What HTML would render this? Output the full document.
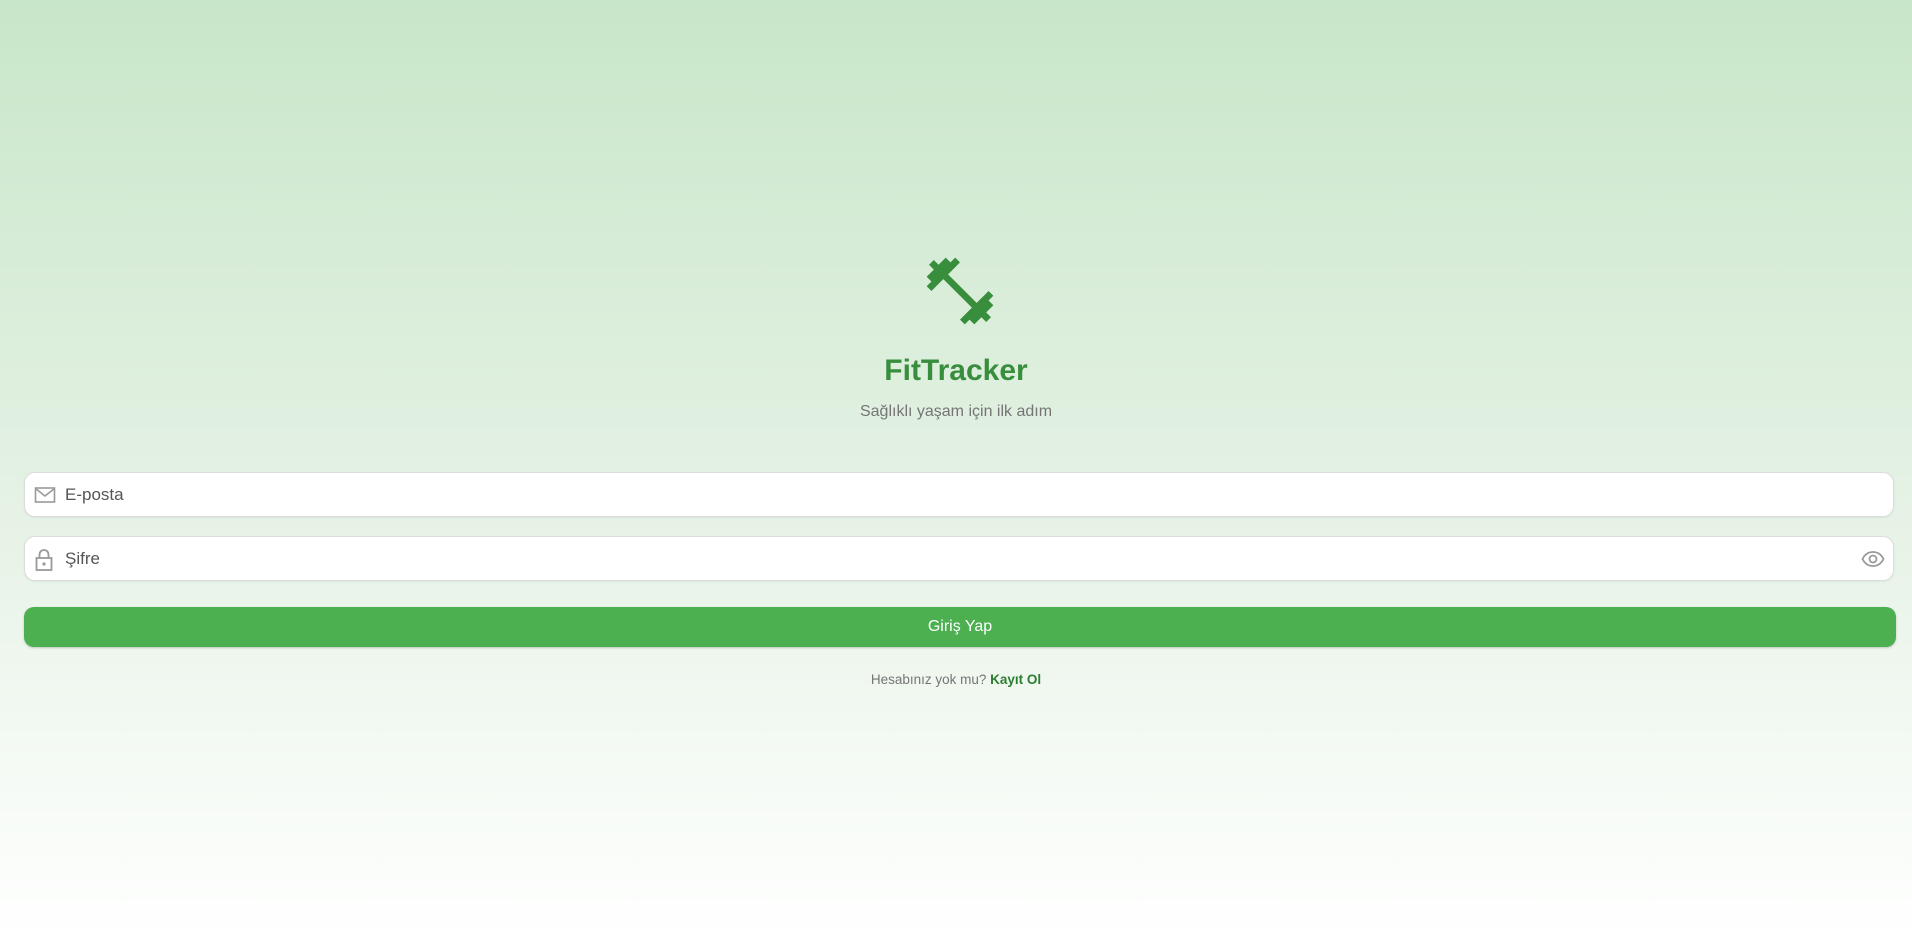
<!DOCTYPE html>
<html><head><meta charset="utf-8"><style>
html,body{margin:0;padding:0;width:1912px;height:940px;overflow:hidden}
body{background:linear-gradient(to bottom,#c8e6c9 0%,#e3f1e3 50%,#ffffff 100%);font-family:"Liberation Sans",sans-serif;position:relative}
.logo{position:absolute;left:920px;top:251px;width:80px;height:80px}
.title{position:absolute;left:0;width:1912px;top:349px;text-align:center;font-size:30px;font-weight:bold;color:#388e3c;line-height:44px}
.sub{position:absolute;left:0;width:1912px;top:401px;text-align:center;font-size:16px;color:#757575;line-height:22px}
.field{position:absolute;left:24px;width:1870px;height:45px;background:#fff;border:1px solid #dcdcdc;border-radius:11px;box-sizing:border-box;box-shadow:0 1px 2px rgba(0,0,0,.06)}
.field span{position:absolute;left:40px;top:12px;font-size:17px;color:#555;line-height:20px}
.field svg{position:absolute}
.btn{position:absolute;left:24px;top:607px;width:1872px;height:40px;background:#4caf50;border-radius:10px;color:#fff;text-align:center;font-size:16px;line-height:40px;box-shadow:0 1px 2px rgba(0,0,0,.2)}
.signup{position:absolute;left:0;width:1912px;top:670px;text-align:center;font-size:13.5px;color:#757575;line-height:20px}
.signup b{color:#2e7d32}
</style></head><body>
<svg class="logo" viewBox="0 0 24 24"><path fill="#388e3c" d="M20.57 14.86L22 13.43 20.57 12 17 15.57 8.43 7 12 3.43 10.57 2 9.14 3.43 7.71 2 5.57 4.14 4.14 2.71 2.71 4.14l1.43 1.43L2 7.71l1.43 1.43L2 10.57 3.43 12 7 8.43 15.57 17 12 20.57 13.43 22l1.43-1.43L16.29 22l2.14-2.14 1.43 1.43 1.43-1.43-1.43-1.43L22 16.29z"/></svg>
<div class="title">FitTracker</div>
<div class="sub">Sağlıklı yaşam için ilk adım</div>
<div class="field" style="top:472px"><svg style="left:9px;top:12px" width="22" height="20" viewBox="0 0 22 20"><rect x="1.5" y="3" width="19" height="14" fill="none" stroke="#9a9a9a" stroke-width="1.6"/><path d="M1.5 3.5L11 11l9.5-7.5" fill="none" stroke="#9a9a9a" stroke-width="1.6"/></svg><span>E-posta</span></div>
<div class="field" style="top:536px"><svg style="left:10px;top:11px" width="18" height="24" viewBox="0 0 18 24"><path d="M4.5 10V6.5a4.5 4.5 0 0 1 9 0V10" fill="none" stroke="#9a9a9a" stroke-width="1.8"/><rect x="1.5" y="10" width="15" height="12" fill="none" stroke="#9a9a9a" stroke-width="1.8"/><circle cx="9" cy="16" r="1.6" fill="#9a9a9a"/></svg><span>Şifre</span><svg style="right:8px;top:13px" width="24" height="18" viewBox="0 0 24 18"><path d="M1.5 9C4 4 8 2 12 2s8 2 10.5 7c-2.5 5-6.5 7-10.5 7S4 14 1.5 9z" fill="none" stroke="#9a9a9a" stroke-width="1.8"/><circle cx="12" cy="9" r="3.5" fill="none" stroke="#9a9a9a" stroke-width="1.8"/></svg></div>
<div class="btn">Giriş Yap</div>
<div class="signup">Hesabınız yok mu? <b>Kayıt Ol</b></div>
</body></html>
